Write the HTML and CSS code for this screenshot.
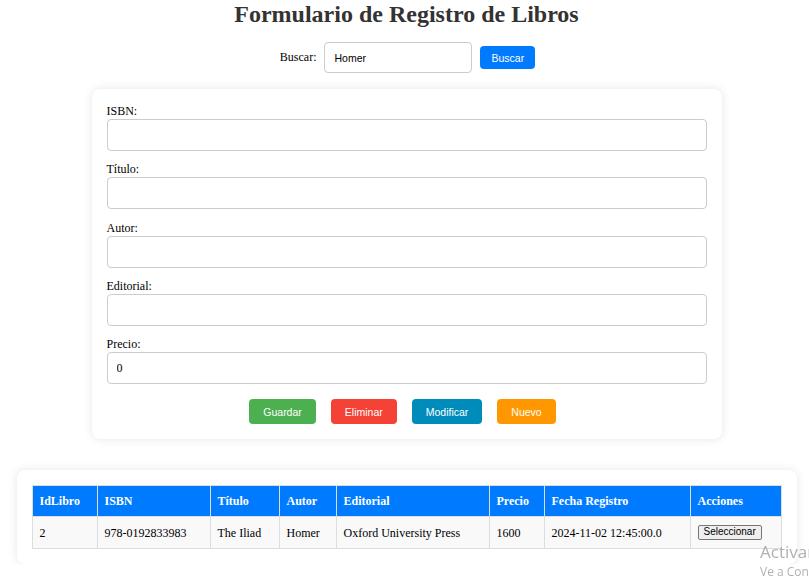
FILE: index.html
```html
<!DOCTYPE html>
<html lang="es">
<head>
<meta charset="utf-8">
<title>Formulario de Registro de Libros</title>
<link rel="stylesheet" href="styles.css">
</head>
<body>
<div class="page">
  <h1 class="title">Formulario de Registro de Libros</h1>
  <form class="search">
    <label class="search-label">Buscar:</label>
    <input class="search-input" type="text" value="Homer">
    <button class="btn btn-blue" type="button">Buscar</button>
  </form>

  <div class="card form-card">
    <div class="field">
      <label class="field-label">ISBN:</label>
      <input class="field-input" type="text">
    </div>
    <div class="field">
      <label class="field-label">Título:</label>
      <input class="field-input" type="text">
    </div>
    <div class="field">
      <label class="field-label">Autor:</label>
      <input class="field-input" type="text">
    </div>
    <div class="field">
      <label class="field-label">Editorial:</label>
      <input class="field-input" type="text">
    </div>
    <div class="field field-last">
      <label class="field-label">Precio:</label>
      <input class="field-input" type="text" value="0">
    </div>
    <div class="actions">
      <button class="btn btn-green" type="button">Guardar</button>
      <button class="btn btn-red" type="button">Eliminar</button>
      <button class="btn btn-teal" type="button">Modificar</button>
      <button class="btn btn-orange" type="button">Nuevo</button>
    </div>
  </div>

  <div class="card table-card">
    <table class="books">
      <colgroup>
        <col class="c1"><col class="c2"><col class="c3"><col class="c4">
        <col class="c5"><col class="c6"><col class="c7"><col class="c8">
      </colgroup>
      <thead>
        <tr>
          <th>IdLibro</th><th>ISBN</th><th>Título</th><th>Autor</th>
          <th>Editorial</th><th>Precio</th><th>Fecha Registro</th><th>Acciones</th>
        </tr>
      </thead>
      <tbody>
        <tr>
          <td>2</td><td>978-0192833983</td><td>The Iliad</td><td>Homer</td>
          <td>Oxford University Press</td><td>1600</td><td>2024-11-02 12:45:00.0</td>
          <td><button class="select-btn" type="button">Seleccionar</button></td>
        </tr>
      </tbody>
    </table>
  </div>
</div>
<div class="watermark">
  <div class="wm-big">Activar Windows</div>
  <div class="wm-small">Ve a Configuración para activar Windows.</div>
</div>
</body>
</html>
```

FILE: styles.css
```css
html, body {
  margin: 0;
  padding: 0;
  background: #ffffff;
  overflow: hidden;
}

body {
  font-family: "Liberation Serif", "Times New Roman", serif;
  font-size: 12px;
  color: #000;
}

.page {
  padding-left: 4px;
}

.title {
  margin: 0 0 14px;
  font-size: 24px;
  line-height: 28px;
  font-weight: bold;
  text-align: center;
  color: #333;
}

.search {
  display: flex;
  align-items: center;
  justify-content: center;
  gap: 8px;
  margin: 0;
  height: 31px;
  padding-left: 2px;
}

.search-label {
  font-size: 12px;
}

.search-input {
  box-sizing: border-box;
  width: 148px;
  height: 31px;
  padding: 0 9px;
  border: 1px solid #ccc;
  border-radius: 4px;
  font-family: "Liberation Sans", Arial, sans-serif;
  font-size: 10.5px;
  color: #000;
  outline: none;
}

.btn {
  box-sizing: border-box;
  height: 25px;
  padding: 0 14px;
  border: none;
  border-radius: 4px;
  color: #fff;
  font-family: "Liberation Sans", Arial, sans-serif;
  font-size: 10.5px;
  cursor: pointer;
}

.search .btn {
  height: 23px;
  padding: 0 11px;
}

.btn-blue { background: #007bff; }
.btn-green { background: #4caf50; }
.btn-red { background: #f44336; }
.btn-teal { background: #008cba; }
.btn-orange { background: #ff9800; }

.card {
  box-sizing: border-box;
  background: #fff;
  border-radius: 8px;
  box-shadow: 0 0 10px rgba(0, 0, 0, 0.1);
  padding: 15px;
  margin-left: auto;
  margin-right: auto;
}

.form-card {
  width: 630px;
  margin-top: 16px;
}

.field {
  margin-bottom: 11.25px;
}

.field-last {
  margin-bottom: 15px;
}

.field-label {
  display: block;
  line-height: 15px;
  font-size: 12px;
}

.field-input {
  display: block;
  box-sizing: border-box;
  width: 100%;
  height: 32px;
  padding: 0 9px;
  border: 1px solid #ccc;
  border-radius: 4px;
  font-family: "Liberation Serif", "Times New Roman", serif;
  font-size: 12px;
  color: #000;
  outline: none;
}

.actions {
  display: flex;
  justify-content: center;
  gap: 15px;
  padding-right: 8px;
}

.table-card {
  width: 780px;
  margin-top: 31px;
}

.books {
  width: 749px;
  table-layout: fixed;
  border-collapse: collapse;
}

.c1 { width: 65px; }
.c2 { width: 113px; }
.c3 { width: 69px; }
.c4 { width: 57px; }
.c5 { width: 153px; }
.c6 { width: 55px; }
.c7 { width: 146px; }
.c8 { width: 91px; }

.books th,
.books td {
  border: 1px solid #ddd;
  padding: 8px 7px;
  text-align: left;
  font-size: 12px;
  line-height: 14px;
  height: 14px;
  white-space: nowrap;
}

.books th {
  background: #007bff;
  color: #fff;
  font-weight: bold;
}

.books td {
  background: #f9f9f9;
  padding-top: 8.5px;
  padding-bottom: 8.5px;
}

.select-btn {
  box-sizing: border-box;
  height: 15px;
  margin: -1px 0;
  padding: 0 5px;
  border: 1px solid #767676;
  border-radius: 2px;
  background: #efefef;
  font-family: "Liberation Sans", Arial, sans-serif;
  font-size: 10px;
  line-height: 12px;
  color: #000;
  vertical-align: top;
}

.watermark {
  position: fixed;
  left: 760px;
  top: 540px;
  color: rgba(150, 150, 150, 0.75);
  font-family: "Open Sans", "Noto Sans", sans-serif;
  white-space: nowrap;
  pointer-events: none;
}

.wm-big {
  font-size: 17px;
  line-height: 24px;
}

.wm-small {
  font-size: 12px;
  line-height: 16px;
}
```
